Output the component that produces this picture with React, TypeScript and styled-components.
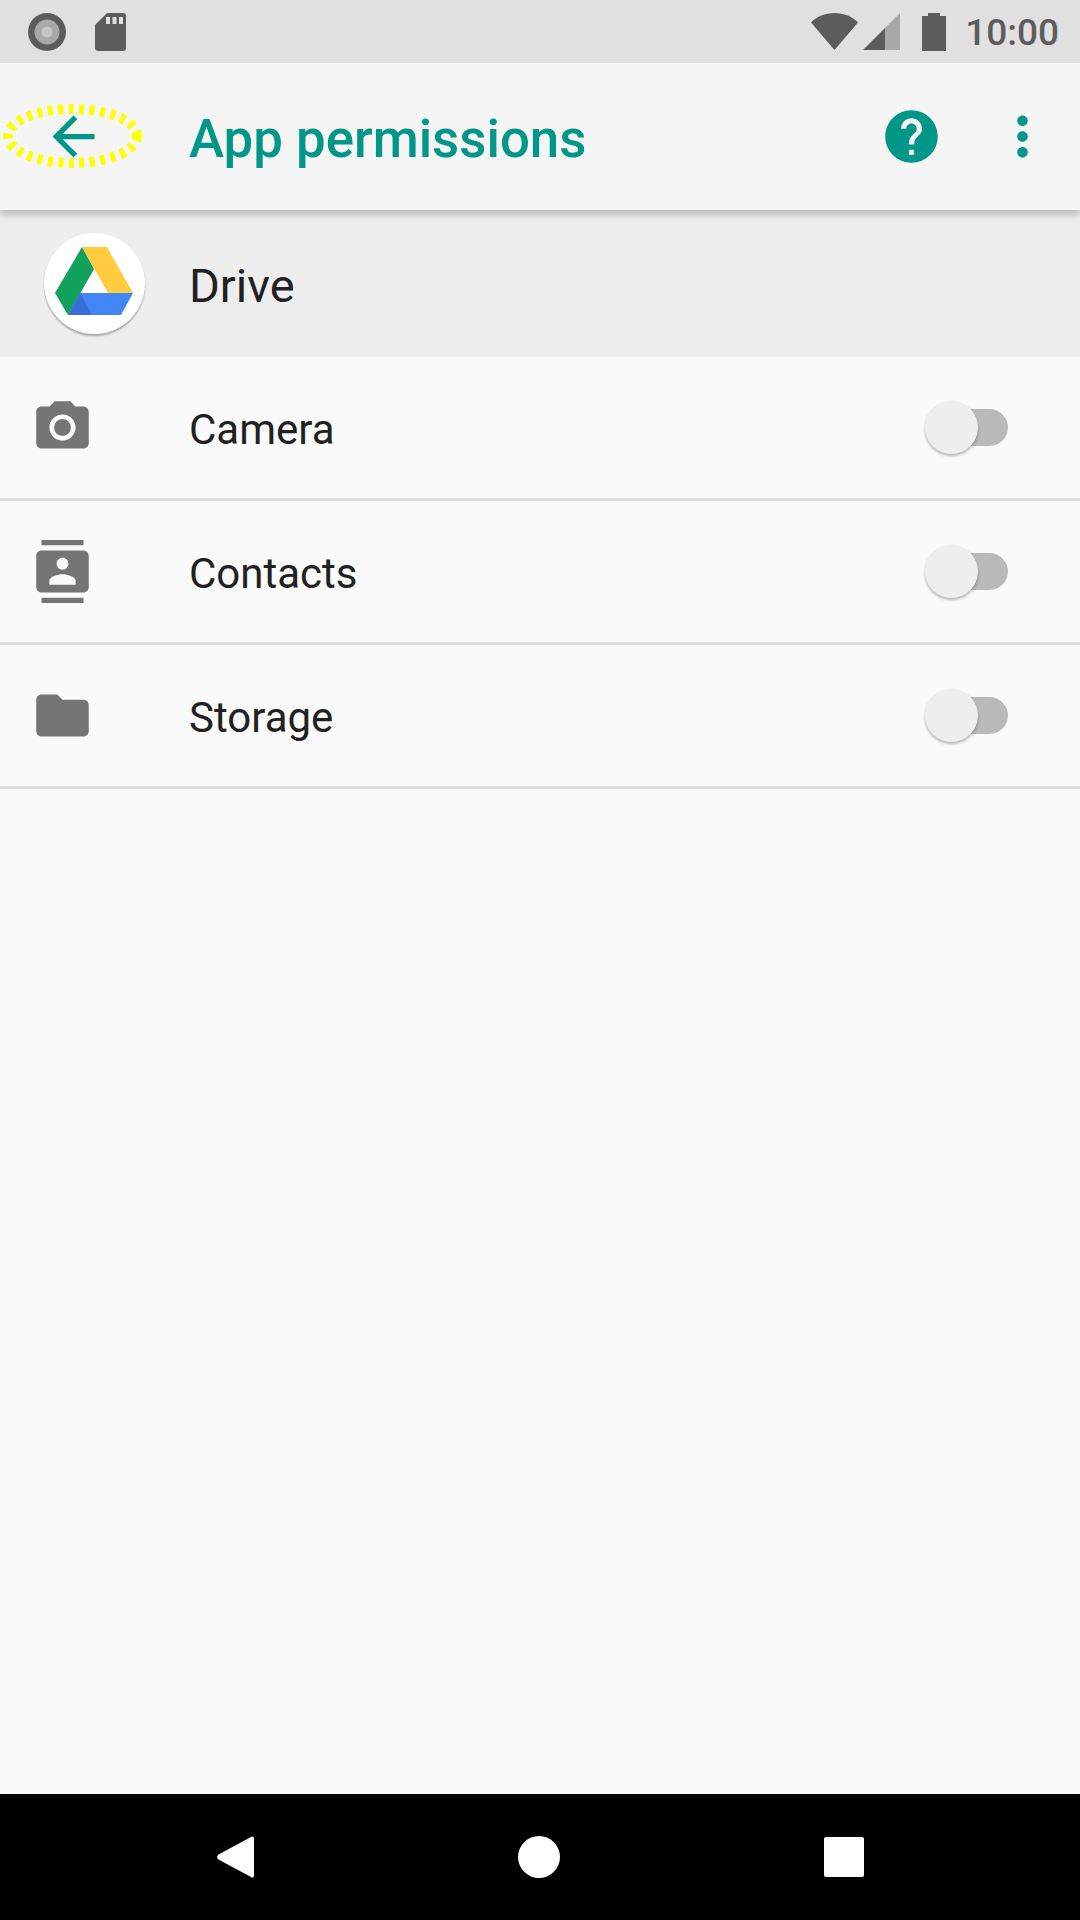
import React from "react";
import styled, { createGlobalStyle } from "styled-components";

const GlobalStyle = createGlobalStyle`
  html, body {
    margin: 0;
    padding: 0;
    background: #fafafa;
    font-family: Roboto, "Noto Sans", sans-serif;
  }
`;

const Screen = styled.div`
  width: 1080px;
  height: 1920px;
  display: flex;
  flex-direction: column;
  overflow: hidden;
  background: #fafafa;
`;

const StatusBar = styled.div`
  position: relative;
  z-index: 3;
  height: 63px;
  flex: none;
  display: flex;
  align-items: center;
  padding: 0 21px 0 28px;
  background: #e0e0e0;
`;

const StatusLeft = styled.div`
  display: flex;
  align-items: center;
  gap: 29px;
  flex: 1;
`;

const StatusRight = styled.div`
  display: flex;
  align-items: center;
`;

const Clock = styled.span`
  margin-left: 19px;
  padding-top: 2px;
  font-size: 37px;
  font-weight: 500;
  color: #5c5c5c;
  line-height: 61px;
`;

const Toolbar = styled.div`
  position: relative;
  z-index: 2;
  height: 147px;
  flex: none;
  display: flex;
  align-items: center;
  padding: 0 26px 0 42px;
  background: #f5f5f5;
  box-shadow: 0 4px 8px rgba(0, 0, 0, 0.25);
`;

const BackButton = styled.div`
  position: relative;
  width: 63px;
  height: 63px;
  flex: none;
  margin-right: 84px;
`;

const Highlight = styled.svg`
  position: absolute;
  left: -42px;
  top: -4px;
  width: 145px;
  height: 70px;
  overflow: visible;
`;

const Title = styled.div`
  flex: 1;
  padding-top: 4px;
  font-size: 52.8px;
  font-weight: 500;
  color: #009688;
`;

const ToolIcon = styled.svg<{ $gap?: number }>`
  width: 63px;
  height: 63px;
  flex: none;
  margin-left: ${(props) => props.$gap || 0}px;
  fill: #009688;
`;

const AppHeader = styled.div`
  height: 147px;
  flex: none;
  display: flex;
  align-items: center;
  padding-left: 44px;
  background: #eeeeee;
`;

const LogoCircle = styled.div`
  width: 101px;
  height: 101px;
  flex: none;
  margin-right: 44px;
  border-radius: 50%;
  background: #ffffff;
  box-shadow: 0 2px 2px rgba(0, 0, 0, 0.3);
`;

const AppName = styled.div`
  padding-top: 4px;
  font-size: 47px;
  color: #212121;
`;

const PermissionList = styled.div`
  flex: 1;
`;

const Row = styled.div`
  height: 141px;
  display: flex;
  align-items: center;
  padding: 0 72px 0 31px;
  border-bottom: 3px solid #dedede;
`;

const RowIcon = styled.svg`
  width: 63px;
  height: 63px;
  flex: none;
  margin-right: 95px;
  fill: #757575;
`;

const RowLabel = styled.div`
  flex: 1;
  padding-top: 4px;
  font-size: 42px;
  color: #212121;
`;

const Switch = styled.div`
  position: relative;
  width: 83px;
  height: 53px;
  flex: none;
`;

const SwitchTrack = styled.div`
  position: absolute;
  left: 3px;
  right: 0;
  top: 8px;
  height: 37px;
  border-radius: 19px;
  background: #b9b9b9;
`;

const SwitchThumb = styled.div`
  position: absolute;
  left: 0;
  top: 0;
  width: 53px;
  height: 53px;
  border-radius: 50%;
  background: #eeeeee;
  box-shadow: 0 2px 3px rgba(0, 0, 0, 0.28);
`;

const NavBar = styled.div`
  height: 126px;
  flex: none;
  display: flex;
  align-items: center;
  justify-content: space-between;
  padding: 0 216px 0 217px;
  background: #000000;
`;

const NavIcon = styled.svg<{ $w: number; $h: number }>`
  width: ${(props) => props.$w}px;
  height: ${(props) => props.$h}px;
  flex: none;
  fill: #ffffff;
  overflow: visible;
`;

const RingIcon = () => (
  <svg width="38" height="38" viewBox="0 0 38 38">
    <circle cx="19" cy="19" r="19" fill="#5c5c5c" />
    <circle cx="19" cy="19" r="12.500" fill="#a8a8a8" />
    <circle cx="19" cy="19" r="5.500" fill="#c6c6c6" />
  </svg>
);

const SdIcon = () => (
  <svg width="31" height="38" viewBox="0 0 31 38">
    <path
      d="M12 0h16c1.700 0 3 1.300 3 3v32c0 1.700-1.300 3-3 3H3c-1.700 0-3-1.300-3-3V12z"
      fill="#5c5c5c"
    />
    <path d="M11 4h4v7h-4zM17.500 4h4v7h-4zM24 4h4v7h-4z" fill="#e0e0e0" />
  </svg>
);

const WifiIcon = () => (
  <svg width="47" height="38" viewBox="0 0 47 38">
    <path d="M0 9.500C6 3.500 14 0 23.500 0S41 3.500 47 9.500L23.500 37z" fill="#5c5c5c" />
  </svg>
);

const SignalIcon = () => (
  <svg width="37" height="38" viewBox="0 0 37 38" style={{ marginLeft: 5 }}>
    <path d="M37 0v37H22V15z" fill="#a8a8a8" />
    <path d="M22 15v22H0z" fill="#5c5c5c" />
  </svg>
);

const BatteryIcon = () => (
  <svg width="24" height="38" viewBox="0 0 24 38" style={{ marginLeft: 22 }}>
    <path d="M6 0h12v3h6v35H0V3h6z" fill="#5c5c5c" />
  </svg>
);

const DriveLogo = () => (
  <svg width="101" height="101" viewBox="44 232 101 101">
    <path d="M82 246h25l26 46h-25z" fill="#ffcb3f" />
    <path d="M82 246l12 22-26 46-13-22z" fill="#12a15a" />
    <path d="M80 292h53l-12 22H68z" fill="#4285f4" />
    <path d="M80 292l12 22H68z" fill="#3a6fd8" />
  </svg>
);

const permissions = [
  {
    name: "Camera",
    icon: (
      <>
        <circle cx="12" cy="12" r="3.200" />
        <path d="M9 2L7.170 4H4c-1.100 0-2 .9-2 2v12c0 1.100.9 2 2 2h16c1.100 0 2-.9 2-2V6c0-1.100-.9-2-2-2h-3.170L15 2H9zm3 15c-2.760 0-5-2.240-5-5s2.240-5 5-5 5 2.240 5 5-2.240 5-5 5z" />
      </>
    ),
  },
  {
    name: "Contacts",
    icon: (
      <path d="M20 0H4v2h16V0zM4 24h16v-2H4v2zM20 4H4c-1.100 0-2 .9-2 2v12c0 1.100.9 2 2 2h16c1.100 0 2-.9 2-2V6c0-1.100-.9-2-2-2zm-8 2.750c1.240 0 2.250 1.010 2.250 2.250s-1.010 2.250-2.250 2.250S9.750 10.240 9.750 9 10.760 6.750 12 6.750zM17 17H7v-1.500c0-1.670 3.330-2.500 5-2.500s5 .83 5 2.500V17z" />
    ),
  },
  {
    name: "Storage",
    icon: (
      <path d="M10 4H4c-1.100 0-1.990.9-1.990 2L2 18c0 1.100.9 2 2 2h16c1.100 0 2-.9 2-2V8c0-1.100-.9-2-2-2h-8l-2-2z" />
    ),
  },
];

const App: React.FC = () => {
  return (
    <Screen>
      <GlobalStyle />
      <StatusBar>
        <StatusLeft>
          <RingIcon />
          <SdIcon />
        </StatusLeft>
        <StatusRight>
          <WifiIcon />
          <SignalIcon />
          <BatteryIcon />
          <Clock>10:00</Clock>
        </StatusRight>
      </StatusBar>
      <Toolbar>
        <BackButton>
          <svg width="63" height="63" viewBox="0 0 24 24" fill="#009688">
            <path d="M20 11H7.830l5.590-5.590L12 4l-8 8 8 8 1.410-1.410L7.830 13H20v-2z" />
          </svg>
          <Highlight viewBox="0 0 145 70">
            <ellipse
              cx="72.500"
              cy="35"
              rx="64.500"
              ry="27"
              fill="none"
              stroke="#ffff00"
              strokeWidth="10"
              strokeDasharray="5 5.500"
            />
          </Highlight>
        </BackButton>
        <Title>App permissions</Title>
        <ToolIcon viewBox="0 0 24 24">
          <path d="M12 2C6.480 2 2 6.480 2 12s4.480 10 10 10 10-4.480 10-10S17.520 2 12 2zm1 17h-2v-2h2v2zm2.070-7.750l-.9.920C13.450 12.900 13 13.500 13 15h-2v-.5c0-1.100.45-2.100 1.170-2.830l1.240-1.260c.37-.36.59-.86.59-1.410 0-1.100-.9-2-2-2s-2 .9-2 2H8c0-2.210 1.790-4 4-4s4 1.790 4 4c0 .88-.36 1.680-.93 2.250z" />
        </ToolIcon>
        <ToolIcon viewBox="0 0 24 24" $gap={48}>
          <path d="M12 8c1.100 0 2-.9 2-2s-.9-2-2-2-2 .9-2 2 .9 2 2 2zm0 2c-1.100 0-2 .9-2 2s.9 2 2 2 2-.9 2-2-.9-2-2-2zm0 6c-1.100 0-2 .9-2 2s.9 2 2 2 2-.9 2-2-.9-2-2-2z" />
        </ToolIcon>
      </Toolbar>
      <AppHeader>
        <LogoCircle>
          <DriveLogo />
        </LogoCircle>
        <AppName>Drive</AppName>
      </AppHeader>
      <PermissionList>
        {permissions.map((permission) => (
          <Row key={permission.name}>
            <RowIcon viewBox="0 0 24 24">{permission.icon}</RowIcon>
            <RowLabel>{permission.name}</RowLabel>
            <Switch>
              <SwitchTrack />
              <SwitchThumb />
            </Switch>
          </Row>
        ))}
      </PermissionList>
      <NavBar>
        <NavIcon viewBox="0 0 37 42" $w={37} $h={42}>
          <path d="M34 1c1.500-1.200 3-.4 3 1.500v37c0 1.900-1.500 2.700-3 1.500L1.500 23.500c-1.800-1.300-1.800-3.700 0-5z" />
        </NavIcon>
        <NavIcon viewBox="0 0 42 42" $w={42} $h={42}>
          <circle cx="21" cy="21" r="21" />
        </NavIcon>
        <NavIcon viewBox="0 0 40 40" $w={40} $h={40}>
          <rect width="40" height="40" rx="2" />
        </NavIcon>
      </NavBar>
    </Screen>
  );
};

export default App;
